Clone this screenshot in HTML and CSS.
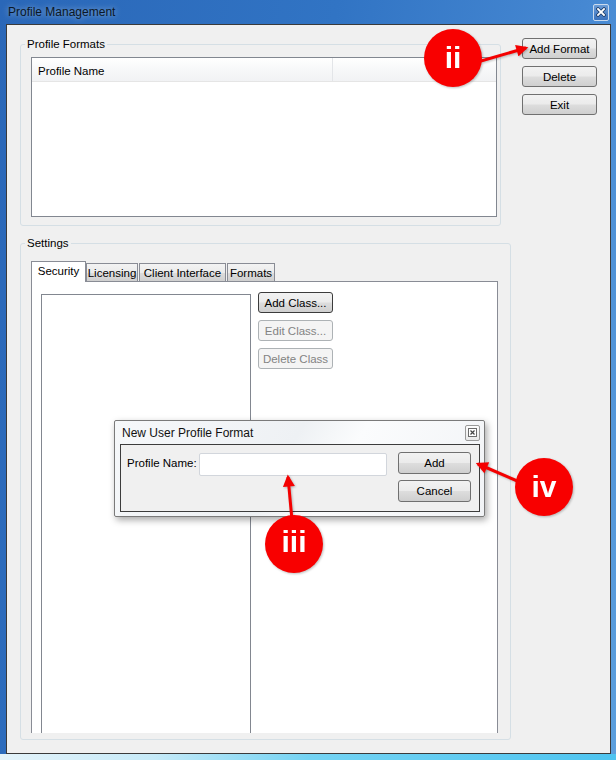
FILE: index.html
```html
<!DOCTYPE html>
<html lang="en">
<head>
    <meta charset="UTF-8">
    <title>Profile Management</title>
    <link rel="stylesheet" href="styles.css">
</head>
<body>
    <div class="window">
        <div class="titlebar">
            <span class="title">Profile Management</span>
            <span class="close-btn">
                <svg width="10" height="10" viewBox="0 0 10 10">
                    <path d="M2 2 L8 8 M8 2 L2 8" stroke="#1c3d6b" stroke-width="3.4" stroke-linecap="square"/>
                    <path d="M2 2 L8 8 M8 2 L2 8" stroke="#fff" stroke-width="1.8" stroke-linecap="square"/>
                </svg>
            </span>
        </div>
        <div class="client">
            <div class="groups">
                <fieldset class="group group-formats">
                    <legend>Profile Formats</legend>
                    <div class="listview">
                        <div class="lv-header">
                            <div class="lv-col lv-col-name">Profile Name</div>
                            <div class="lv-col"></div>
                        </div>
                    </div>
                </fieldset>
                <fieldset class="group group-settings">
                    <legend>Settings</legend>
                    <div class="tabs">
                        <div class="tab active tab-security">Security</div>
                        <div class="tab tab-licensing">Licensing</div>
                        <div class="tab tab-client">Client Interface</div>
                        <div class="tab tab-formats">Formats</div>
                    </div>
                    <div class="tab-panel">
                        <div class="listbox"></div>
                        <div class="class-buttons">
                            <button class="btn btn-default">Add Class...</button>
                            <button class="btn" disabled>Edit Class...</button>
                            <button class="btn" disabled>Delete Class</button>
                        </div>
                    </div>
                </fieldset>
            </div>
            <div class="side-buttons">
                <button class="btn">Add Format</button>
                <button class="btn">Delete</button>
                <button class="btn">Exit</button>
            </div>
        </div>

        <div class="dialog">
            <div class="dialog-title">
                <span>New User Profile Format</span>
                <span class="dialog-close">
                    <svg width="9" height="9" viewBox="0 0 9 9">
                        <rect x="0.5" y="0.5" width="8" height="8" fill="#fff" stroke="#6b6b6b"/>
                        <path d="M2.5 2.5 L6.5 6.5 M6.5 2.5 L2.5 6.5" stroke="#444" stroke-width="1.2"/>
                    </svg>
                </span>
            </div>
            <div class="dialog-body">
                <label class="dialog-label" for="profileName">Profile Name:</label>
                <input type="text" id="profileName" class="dialog-input">
                <button class="btn dialog-btn">Add</button>
                <button class="btn dialog-btn dialog-cancel">Cancel</button>
            </div>
        </div>

        <svg class="annotations" width="616" height="760" viewBox="0 0 616 760">
            <defs>
                <marker id="arrowhead" viewBox="0 0 10 10" refX="8" refY="5" markerWidth="4.5" markerHeight="4" orient="auto">
                    <path d="M0,0 L10,5 L0,10 z" fill="#f40000"/>
                </marker>
            </defs>
            <line x1="474" y1="63" x2="526" y2="48" class="arrow" marker-end="url(#arrowhead)"/>
            <line x1="292" y1="520" x2="288" y2="477" class="arrow" marker-end="url(#arrowhead)"/>
            <line x1="522" y1="483" x2="478" y2="464" class="arrow" marker-end="url(#arrowhead)"/>
            <circle cx="453" cy="58" r="29" class="badge"/>
            <circle cx="294" cy="544" r="29" class="badge"/>
            <circle cx="544" cy="487" r="29" class="badge"/>
            <text x="453" y="68" class="badge-text">ii</text>
            <text x="294" y="552" class="badge-text">iii</text>
            <text x="544" y="497" class="badge-text">iv</text>
        </svg>
    </div>
</body>
</html>
```

FILE: styles.css
```css
* {
    box-sizing: border-box;
}
body {
    margin: 0;
    font-family: "Liberation Sans", Arial, sans-serif;
    font-size: 11.5px;
    color: #000;
}
.window {
    position: relative;
    width: 616px;
    height: 760px;
    display: flex;
    flex-direction: column;
    padding: 0 5px 6px 6px;
    background:
        linear-gradient(to right, #e4f3fa 0%, #c6eaf8 25%, #74d3f3 50%, #4ec4f0 100%) bottom / 100% 6px no-repeat,
        linear-gradient(100deg, #2a67b8 0%, #3174c4 45%, #4688d2 78%, #5c9fdd 100%);
}
.titlebar {
    height: 24px;
    display: flex;
    align-items: center;
    justify-content: space-between;
    padding: 0 2px 0 2px;
}
.title {
    font-size: 12px;
    color: #0b1726;
    text-shadow: 0 0 6px rgba(255, 255, 255, 0.55);
}
.close-btn {
    width: 16px;
    height: 17px;
    border: 1px solid #c9daee;
    border-radius: 2px;
    background: linear-gradient(#6b9cd6, #3a72bd);
    display: flex;
    align-items: center;
    justify-content: center;
}
.client {
    flex: 1;
    display: flex;
    gap: 11px;
    padding: 12px 13px 11px 13px;
    border: 1px solid #3a3a3a;
    background: #f0f0f0;
}
.groups {
    width: 491px;
}
.group {
    margin: 0;
    padding: 0;
    border: 1px solid #d5dfe5;
    border-radius: 3px;
}
.group legend {
    margin-left: 4px;
    padding: 0 2px;
    line-height: 14px;
}
.group-formats {
    width: 481px;
}
.group-settings {
    margin-top: 10px;
    padding-bottom: 6px;
}
.listview {
    margin: 6px 3px 8px 10px;
    height: 160px;
    border: 1px solid #828790;
    background: #fff;
}
.lv-header {
    display: flex;
    height: 24px;
    border-bottom: 1px solid #e5e5e5;
    background: linear-gradient(#ffffff, #f7f8f9 50%, #f1f2f4);
}
.lv-col {
    flex: 1;
    display: flex;
    align-items: center;
    padding: 2px 0 0 6px;
}
.lv-col-name {
    flex: none;
    width: 301px;
    border-right: 1px solid #e3e5e8;
}
.tabs {
    display: flex;
    align-items: flex-end;
    margin: 11px 0 0 10px;
    height: 20px;
}
.tab {
    height: 18px;
    display: flex;
    align-items: center;
    justify-content: center;
    white-space: nowrap;
    border: 1px solid #898c95;
    border-bottom: none;
    background: linear-gradient(#f3f3f3, #ebebeb 50%, #dddddd 50%, #cfcfcf);
    padding-top: 1px;
}
.tab + .tab {
    margin-left: 1px;
}
.tab.active {
    position: relative;
    z-index: 1;
    height: 21px;
    margin-bottom: -1px;
    background: #fff;
    padding-top: 0;
    padding-bottom: 2px;
}
.tab.active + .tab {
    margin-left: 0;
}
.tab-security {
    width: 55px;
}
.tab-licensing {
    width: 52px;
}
.tab-client {
    width: 87px;
}
.tab-formats {
    width: 48px;
}
.tab-panel {
    display: flex;
    margin: 0 12px 0 10px;
    height: 452px;
    padding: 10px 0 0 9px;
    border: 1px solid #898c95;
    border-bottom: none;
    background: #fff;
}
.listbox {
    width: 210px;
    margin-top: 2px;
    border: 1px solid #828790;
    border-bottom: none;
}
.class-buttons {
    display: flex;
    flex-direction: column;
    gap: 7px;
    margin-left: 7px;
}
.side-buttons {
    display: flex;
    flex-direction: column;
    gap: 7px;
    margin-top: 1px;
}
.btn {
    width: 75px;
    height: 21px;
    padding: 0;
    border: 1px solid #707070;
    border-radius: 3px;
    background: linear-gradient(#f2f2f2, #ebebeb 48%, #dddddd 52%, #cfcfcf);
    font-family: inherit;
    font-size: 11.5px;
    color: #000;
}
.btn-default {
    border-color: #3c3c3c;
}
.btn:disabled {
    border-color: #adb2b5;
    background: #f4f4f4;
    color: #838383;
}
.dialog {
    position: absolute;
    left: 114px;
    top: 420px;
    width: 371px;
    height: 97px;
    display: flex;
    flex-direction: column;
    padding: 0 4px 4px 5px;
    border: 1px solid #7a7a7a;
    border-radius: 2px;
    background: linear-gradient(120deg, #f6f8fa 0%, #eef1f4 45%, #fbfcfd 60%, #f1f3f6 100%);
    box-shadow: 2px 3px 7px rgba(0, 0, 0, 0.35);
}
.dialog-title {
    height: 23px;
    display: flex;
    align-items: center;
    justify-content: space-between;
    padding-left: 2px;
    font-size: 12px;
    color: #111;
}
.dialog-close {
    width: 15px;
    height: 16px;
    border: 1px solid #9a9a9a;
    border-radius: 2px;
    background: linear-gradient(#fdfdfd, #e9e9e9);
    display: flex;
    align-items: center;
    justify-content: center;
}
.dialog-body {
    flex: 1;
    display: grid;
    grid-template-columns: 61px 188px 73px;
    grid-auto-rows: 22px;
    column-gap: 11px;
    row-gap: 6px;
    padding: 7px 0 0 6px;
    border: 1px solid #3c3c3c;
    background: #f0f0f0;
}
.dialog-label {
    align-self: center;
    white-space: nowrap;
}
.dialog-input {
    height: 23px;
    margin: 1px 0 0 0;
    border: 1px solid #d2d6dc;
    border-radius: 2px;
    background: #fff;
}
.dialog-btn {
    width: 73px;
    height: 22px;
}
.dialog-cancel {
    grid-column: 3;
}
.annotations {
    position: absolute;
    left: 0;
    top: 0;
    pointer-events: none;
    filter: drop-shadow(1px 1px 1px rgba(0, 0, 0, 0.25));
}
.arrow {
    stroke: #f40000;
    stroke-width: 3;
}
.badge {
    fill: #f80000;
}
.badge-text {
    fill: #fff;
    font-family: "Liberation Sans", Arial, sans-serif;
    font-size: 30px;
    font-weight: bold;
    text-anchor: middle;
}
```
